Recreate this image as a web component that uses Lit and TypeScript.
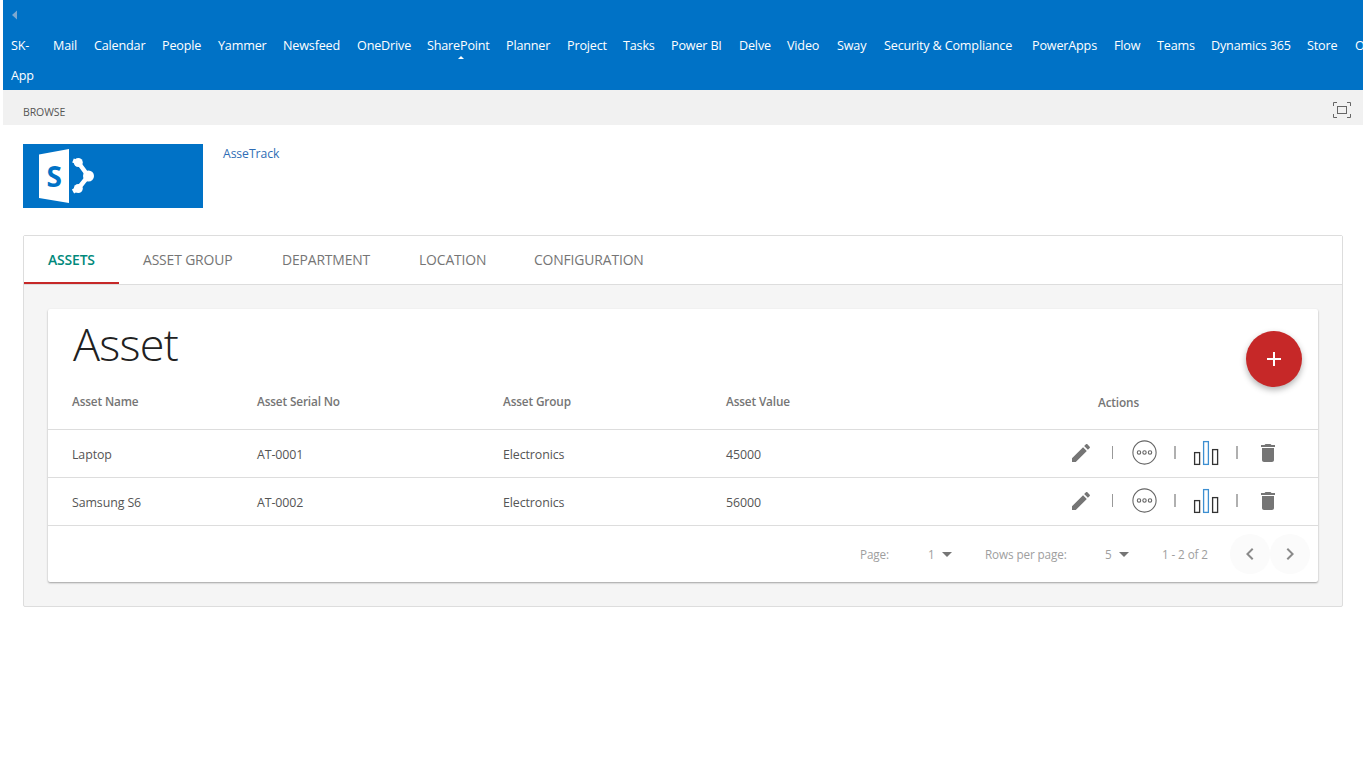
import { LitElement, html, css, svg } from "lit";
import { customElement } from "lit/decorators.js";

const NAV = ["Mail","Calendar","People","Yammer","Newsfeed","OneDrive","SharePoint","Planner","Project","Tasks","Power BI","Delve","Video","Sway","Security & Compliance","PowerApps","Flow","Teams","Dynamics 365","Store","Office 365"];
const ROWS = [
  ["Laptop","AT-0001","Electronics","45000"],
  ["Samsung S6","AT-0002","Electronics","56000"],
];
const TABS = ["ASSETS","ASSET GROUP","DEPARTMENT","LOCATION","CONFIGURATION"];

const edit = svg`<path d="M3 17.25V21h3.75L17.81 9.94l-3.75-3.75L3 17.25zM20.71 7.04c.39-.39.39-1.02 0-1.41l-2.34-2.34c-.39-.39-1.02-.39-1.41 0l-1.83 1.83 3.75 3.75 1.83-1.83z"/>`;
const trash = svg`<path d="M6 19c0 1.1.9 2 2 2h8c1.1 0 2-.9 2-2V7H6v12zM19 4h-3.5l-1-1h-5l-1 1H5v2h14V4z"/>`;

@customElement("app-root")
export class AppRoot extends LitElement {
  static styles = css`
    :host { display: block; padding: 0 3px; font-family: "Open Sans", "Noto Sans", sans-serif; color: #444; height: 768px; box-sizing: border-box; overflow: hidden; }
    .top { background: #0072c6; height: 90px; color: #fff; overflow: hidden; position: relative; }
    .back { height: 31px; padding: 0 0 2px 8px; box-sizing: border-box; display: flex; align-items: center; }
    .nav { display: grid; grid-template-columns: 8px 42px 41px 68px 56px 65px 74px 70px 79px 61px 56px 48px 68px 48px 50px 47px 148px 82px 43px 54px 96px 48px 60px; font-size: 12.6px; letter-spacing: -0.17px; line-height: 30px; white-space: nowrap; }
    .nav .sk { grid-column: 2; white-space: normal; width: 30px; }
    .nav .item { position: relative; }
    .caret { position: absolute; left: 31px; top: 25px; width: 0; height: 0; border: 3px solid transparent; border-top: 0; border-bottom-color: #fff; }
    .ribbon { background: #f1f1f1; height: 35px; display: flex; align-items: center; justify-content: space-between; padding: 4px 12px 0 20px; box-sizing: border-box; font-size: 10.5px; color: #555; }
    .ribbon span { letter-spacing: -0.1px; position: relative; top: 2px; }
    .brand { display: flex; padding: 19px 0 0 20px; gap: 20px; height: 91px; box-sizing: border-box; }
    .logo { width: 180px; height: 64px; background: #0072c6; display: block; }
    .site { font-size: 12.2px; color: #2f6db5; letter-spacing: -0.07px; line-height: 20px; }
    .panel { margin: 19px 20px 0; border: 1px solid #ddd; border-radius: 2px; background: #f5f5f5; height: 372px; box-sizing: border-box; }
    .tabs { background: #fff; height: 49px; border-bottom: 1px solid #ddd; box-sizing: border-box; display: grid; grid-template-columns: 95px 139px 137px 115px auto; font-size: 13.9px; letter-spacing: -0.14px; }
    .tab { padding-left: 24px; line-height: 48px; color: #757575; height: 48px; box-sizing: border-box; white-space: nowrap; }
    .tab.on { color: #00897b; font-weight: 600; border-bottom: 2px solid #c62828; }
    .card { margin: 24px 24px 0; background: #fff; height: 273px; border-radius: 2px; box-shadow: 0 1px 2px rgba(0,0,0,.35); position: relative; }
    h1 { margin: 0; padding: 10px 0 0 25px; height: 60px; box-sizing: border-box; font-weight: 300; font-size: 45px; line-height: 50px; letter-spacing: -0.75px; color: #212121; }
    .fab { position: absolute; left: 1198px; top: 22px; width: 56px; height: 56px; border-radius: 50%; background: #c62828; box-shadow: 0 3px 6px rgba(0,0,0,.3); display: flex; align-items: center; justify-content: center; }
    .row { display: grid; grid-template-columns: 185px 246px 223px 1fr 253px; padding-left: 24px; align-items: center; box-sizing: border-box; }
    .head { height: 61px; border-bottom: 1px solid #ddd; color: #757575; font-weight: 600; letter-spacing: -0.15px; font-size: 11.8px; }
    .head > div { position: relative; top: 2px; }
    .head > .act { padding-left: 33px; top: 3px; }
    .body { height: 48px; border-bottom: 1px solid #ddd; color: #555; letter-spacing: -0.1px; font-size: 12.4px; }
    .cell { position: relative; top: 1px; }
    .icons { display: grid; grid-template-columns: 32px 31px 32px 30px 32px 30px 32px; justify-items: center; align-items: center; position: relative; top: -1px; }
    .icons svg { display: block; }
    .gray { fill: #757575; }
    .sep { width: 1px; height: 13px; background: #999; }
    .sep.thick { width: 2px; background: #b0b0b0; }
    .pager { display: grid; grid-template-columns: 68px 57px 120px 57px 68px 40px 40px; justify-content: start; height: 56px; align-items: center; padding-left: 812px; font-size: 11.7px; color: #9e9e9e; letter-spacing: -0.1px; }
    .sel { display: flex; align-items: center; gap: 7px; }
    .tri { width: 0; height: 0; border: 5px solid transparent; border-bottom: 0; border-top-color: #757575; }
    .pg { width: 40px; height: 40px; border-radius: 50%; background: #fbfbfb; display: flex; align-items: center; justify-content: center; }
    .pg svg { fill: #8a8a8a; }
  `;

  private actions() {
    return html`<div class="icons">
      <svg width="24" height="24" viewBox="0 0 24 24" class="gray">${edit}</svg>
      <div class="sep"></div>
      <svg width="25" height="25" viewBox="0 0 25 25" fill="none" stroke="#666" stroke-width="1.1">
        <circle cx="12.5" cy="12.5" r="11.6"/>
        <circle cx="7" cy="12.5" r="1.7"/><circle cx="12.5" cy="12.5" r="1.7"/><circle cx="18" cy="12.5" r="1.7"/>
      </svg>
      <div class="sep thick"></div>
      <svg width="26" height="26" viewBox="0 0 26 26" fill="none" stroke-width="1.3">
        <rect x="1.6" y="12.6" width="5" height="11.8" stroke="#333"/>
        <rect x="10.6" y="1.6" width="4.8" height="22.8" stroke="#3d8fd1"/>
        <rect x="19.6" y="9.6" width="5" height="14.8" stroke="#333"/>
      </svg>
      <div class="sep thick"></div>
      <svg width="24" height="24" viewBox="0 0 24 24" class="gray">${trash}</svg>
    </div>`;
  }

  render() {
    return html`
      <div class="top">
        <div class="back"><svg width="7" height="10" viewBox="0 0 7 10"><path d="M6 0.5V9.5L1 5z" fill="#7ea9cf"/></svg></div>
        <div class="nav">
          <div class="sk">SK-App</div>
          ${NAV.map((n) => html`<div class="item">${n}${n === "SharePoint" ? html`<span class="caret"></span>` : ""}</div>`)}
        </div>
      </div>
      <div class="ribbon">
        <span>BROWSE</span>
        <svg width="18" height="16" viewBox="0 0 18 16" fill="none" stroke="#666" stroke-width="1">
          <path d="M.5 4V.5H4M14 .5h3.500V4M.5 12v3.500H4M14 15.500h3.500V12"/>
          <rect x="4.500" y="4.500" width="9" height="7"/>
        </svg>
      </div>
      <div class="brand">
        <svg class="logo" viewBox="0 0 180 64">
          <path d="M16 10.500 46 5v54l-30-5z" fill="#fff"/>
          <text x="23.500" y="42.500" font-family="Open Sans, sans-serif" font-weight="700" font-size="28" fill="#0072c6">S</text>
          <path d="M50 16.500 55.300 18.500 65.300 32 55.300 44.500 50 47.500" fill="none" stroke="#fff" stroke-width="4.500" stroke-linejoin="round"/>
          <circle cx="55.300" cy="18.500" r="4.500" fill="#fff"/><circle cx="55.300" cy="44.500" r="4.500" fill="#fff"/><circle cx="65.500" cy="32" r="5.500" fill="#fff"/>
        </svg>
        <div class="site">AsseTrack</div>
      </div>
      <div class="panel">
        <div class="tabs">
          ${TABS.map((t, i) => html`<div class="tab ${i === 0 ? "on" : ""}">${t}</div>`)}
        </div>
        <div class="card">
          <h1>Asset</h1>
          <div class="fab"><svg width="14" height="14" viewBox="0 0 14 14"><path d="M6 0h2v6h6v2H8v6H6V8H0V6h6z" fill="#fff"/></svg></div>
          <div class="row head">
            <div>Asset Name</div><div>Asset Serial No</div><div>Asset Group</div><div>Asset Value</div><div class="act">Actions</div>
          </div>
          ${ROWS.map((r) => html`<div class="row body">${r.map((c) => html`<div class="cell">${c}</div>`)}${this.actions()}</div>`)}
          <div class="pager">
            <div>Page:</div>
            <div class="sel">1 <span class="tri"></span></div>
            <div>Rows per page:</div>
            <div class="sel">5 <span class="tri"></span></div>
            <div>1 - 2 of 2</div>
            <div class="pg"><svg width="24" height="24" viewBox="0 0 24 24"><path d="M15.410 7.410 14 6l-6 6 6 6 1.410-1.410L10.830 12z"/></svg></div>
            <div class="pg"><svg width="24" height="24" viewBox="0 0 24 24"><path d="M10 6 8.590 7.410 13.170 12l-4.580 4.590L10 18l6-6z"/></svg></div>
          </div>
        </div>
      </div>
    `;
  }
}
